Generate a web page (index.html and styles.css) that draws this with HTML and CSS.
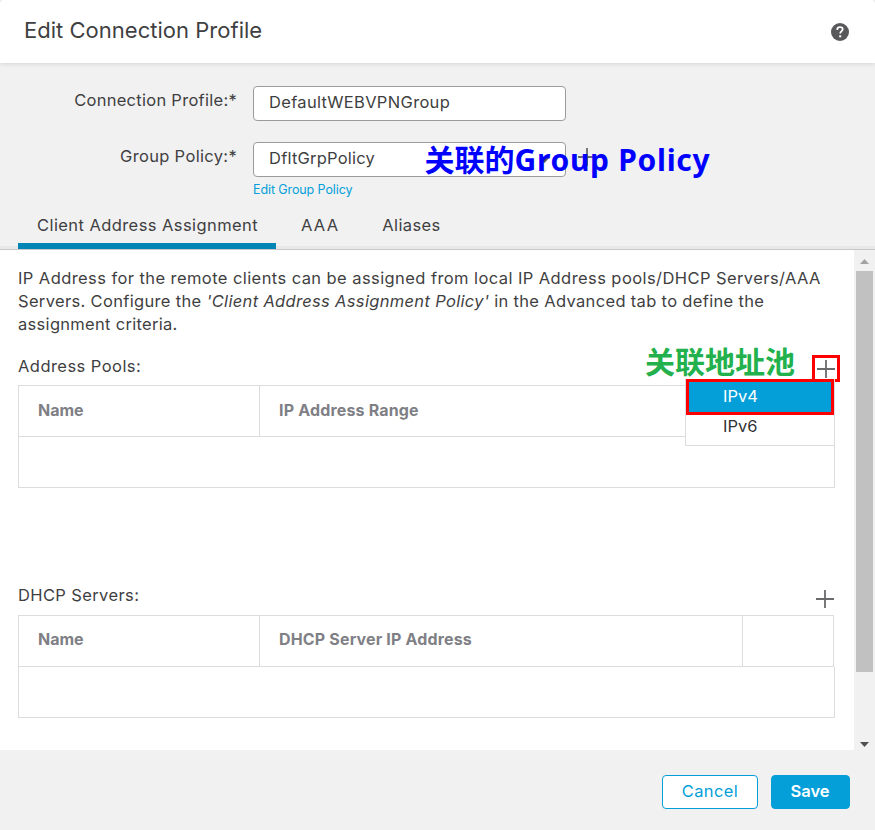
FILE: index.html
```html
<!DOCTYPE html>
<html lang="en">
<head>
<meta charset="utf-8">
<title>Edit Connection Profile</title>
<link rel="stylesheet" href="styles.css">
</head>
<body>
<div class="dialog">
  <header class="head">
    <h1><span class="t-title">Edit Connection Profile</span></h1>
    <svg class="help" width="18" height="18" viewBox="0 0 18 18"><circle cx="9" cy="9" r="9" fill="#58585b"/><path d="M6.3 7V6.3C6.3 4.9 7.4 4.2 9 4.2s2.700.8 2.700 2.100C11.700 8.200 9.200 8.100 9.200 10.600" fill="none" stroke="#fff" stroke-width="1.800"/><rect x="8.200" y="12.300" width="2" height="2" fill="#fff"/></svg>
  </header>
  <section class="form">
    <div class="row">
      <label><span class="t-conn">Connection Profile:*</span></label>
      <div class="input"><span class="t-def">DefaultWEBVPNGroup</span></div>
    </div>
    <div class="row second">
      <label><span class="t-gp">Group Policy:*</span></label>
      <div class="input select"><span class="t-dflt">DfltGrpPolicy</span>
        <svg class="caret" width="9" height="5" viewBox="0 0 9 5"><path d="M0 0h9L4.500 5z" fill="#58585b"/></svg>
      </div>
      <svg class="plus side" width="18" height="18" viewBox="0 0 18 18"><path d="M9 0v18M0 9h18" stroke="#6b6b6e" stroke-width="1.800"/></svg>
      <div class="note blue">关联的<span class="t-note">Group Policy</span></div>
    </div>
    <a class="edit"><span class="t-edit">Edit Group Policy</span></a>
    <nav class="tabs">
      <div class="tab active"><span class="t-tab">Client Address Assignment</span></div>
      <div class="tab"><span class="t-aaa">AAA</span></div>
      <div class="tab"><span class="t-ali">Aliases</span></div>
    </nav>
  </section>
  <main class="panel">
    <div class="content">
      <p><span class="t-p1">IP Address for the remote clients can be assigned from local IP Address pools/DHCP Servers/AAA</span><br><span class="t-p2">Servers. Configure the <i>'Client Address Assignment Policy'</i> in the Advanced tab to define the</span><br><span class="t-p3">assignment criteria.</span></p>
      <div class="bar">
        <span class="t-pool">Address Pools:</span>
        <div class="note green">关联地址池</div>
        <div class="mark"><svg class="plus" width="18" height="18" viewBox="0 0 18 18"><path d="M9 0v18M0 9h18" stroke="#6b6b6e" stroke-width="1.800"/></svg></div>
        <div class="menu"><div class="item on"><span class="t-ip">IPv4</span></div><div class="item"><span class="t-ip">IPv6</span></div></div>
      </div>
      <div class="table">
        <div class="thead"><div class="c1"><span class="t-name">Name</span></div><div class="c2"><span class="t-range">IP Address Range</span></div></div>
        <div class="tbody"></div>
      </div>
      <div class="bar dhcp">
        <span class="t-dhcp">DHCP Servers:</span>
        <svg class="plus" width="18" height="18" viewBox="0 0 18 18"><path d="M9 0v18M0 9h18" stroke="#6b6b6e" stroke-width="1.800"/></svg>
      </div>
      <div class="table">
        <div class="thead narrow"><div class="c1"><span class="t-name">Name</span></div><div class="c2"><span class="t-srv">DHCP Server IP Address</span></div><div class="c3"></div></div>
        <div class="tbody"></div>
      </div>
    </div>
    <div class="scroll">
      <svg width="9" height="5" viewBox="0 0 9 5"><path d="M0 5h9L4.500 0z" fill="#a3a3a3"/></svg>
      <div class="thumb"></div>
      <svg class="down" width="9" height="5" viewBox="0 0 9 5"><path d="M0 0h9L4.500 5z" fill="#505050"/></svg>
    </div>
  </main>
  <footer class="foot">
    <button class="btn cancel"><span class="t-can">Cancel</span></button>
    <button class="btn save"><span class="t-save">Save</span></button>
  </footer>
</div>
</body>
</html>
```
FILE: styles.css
```css
* { box-sizing: border-box; }
body { margin: 0; background: #f1f1f1; color: #3f3f42; font: 400 16.5px/23px Inter, "Noto Sans CJK SC", sans-serif; }
span { white-space: nowrap; }
svg { display: block; }
.dialog { width: 875px; height: 830px; display: flex; flex-direction: column; overflow: hidden; }

.head { height: 63px; flex: none; background: #fff; box-shadow: 0 1px 4px rgba(0,0,0,.12); display: flex; justify-content: space-between; padding: 15px 26px 0 24px; border-radius: 4px 4px 0 0; z-index: 1; }
h1 { margin: 0; font-size: 22px; line-height: 31px; font-weight: 400; }
.help { margin-top: 8px; }

.form { height: 187px; flex: none; display: flex; flex-direction: column; padding-top: 23px; background: #f1f1f1; border-bottom: 1px solid #c8c8c8; }
.row { display: flex; height: 35px; position: relative; }
.second { margin-top: 21px; }
.row label { width: 253px; padding-right: 16px; text-align: right; line-height: 29px; }
.input { width: 313px; border: 1px solid #9b9b9e; border-radius: 4px; background: #fff; padding-left: 15px; line-height: 31px; display: flex; }
.caret { margin: 15px 16px 0 auto; }
.side { margin: 6px 0 0 12px; }
.note { position: absolute; font: 700 30px/36px "Noto Sans", "Noto Sans CJK SC", sans-serif; white-space: nowrap; }
.blue { left: 424.5px; top: 0; color: #00f; }
.green { left: 627px; top: 8px; color: #22b14c; }
.edit { margin-left: 253px; font-size: 12.500px; color: #049fd9; line-height: 26px; }
.tabs { margin-top: auto; display: flex; padding-left: 18px; height: 42px; line-height: 37px; background: linear-gradient(#f1f1f1 39px, #e8e8e8 39px); }
.tab { margin-left: 43px; }
.tab.active { width: 258px; margin-left: 0; margin-right: -18px; padding-left: 19px; border-bottom: 6px solid #0085b4; }

.panel { height: 500px; flex: none; display: flex; background: #fff; }
.content { width: 854px; padding: 17px 19px 0 18px; }
p { margin: 0; }
.bar { position: relative; height: 49px; display: flex; justify-content: space-between; padding-top: 19px; }
.mark { position: absolute; left: 794px; top: 19px; width: 28px; height: 27px; border: 3px solid #f00; padding: 2px; }
.menu { position: absolute; left: 667px; top: 43px; width: 150px; height: 67px; background: #fff; border: 1px solid #dcdcde; border-top: 0; z-index: 2; }
.item { height: 30px; line-height: 22px; padding-left: 37px; color: #333; }
.item.on { height: 36px; width: 148px; line-height: 29px; border: 3px solid #f00; background: #049fd9; color: #fff; padding-left: 34px; }
.table { height: 103px; }
.thead { height: 52px; border: 1px solid #dcdcde; display: flex; font-size: 16px; font-weight: 700; color: #7f7f86; line-height: 49px; }
.narrow { width: 816px; line-height: 47px; }
.c1 { width: 241px; padding-left: 19px; border-right: 1px solid #dcdcde; }
.c2 { flex: 1; padding-left: 19px; }
.c3 { width: 91px; border-left: 1px solid #dcdcde; }
.tbody { height: 51px; border: 1px solid #dcdcde; border-top: 0; }
.dhcp { margin-top: 96px; height: 31px; padding-top: 0; }
.dhcp .plus { margin-top: 6px; margin-right: 1px; }
.scroll { width: 21px; background: #f1f1f1; display: flex; flex-direction: column; align-items: center; padding-top: 9px; }
.thumb { width: 17px; height: 401px; margin-top: 7px; background: #c1c1c1; }
.down { margin-top: 70px; }

.foot { height: 80px; background: #f1f1f1; display: flex; justify-content: flex-end; padding: 25px 25px 0 0; gap: 13px; }
.btn { height: 34px; border-radius: 4px; font: 400 16.5px/30px Inter, sans-serif; padding: 0 0 2px; }
.cancel { width: 96px; border: 1px solid #049fd9; color: #049fd9; background: #fff; }
.save { width: 79px; border: 1px solid #049fd9; color: #fff; background: #049fd9; font-weight: 600; padding-right: 1px; }

/* Tracking per label */
.t-title { letter-spacing: .02px; }
.t-conn { letter-spacing: .28px; }
.t-gp { letter-spacing: .33px; }
.t-def { letter-spacing: .33px; }
.t-dflt { letter-spacing: .22px; }
.t-edit { letter-spacing: -.1px; }
.t-tab { letter-spacing: .42px; }
.t-aaa { letter-spacing: 1.2px; }
.t-ali { letter-spacing: .4px; }
.t-p1 { letter-spacing: .42px; }
.t-p2 { letter-spacing: .33px; }
.t-p3 { letter-spacing: .3px; }
.t-pool { letter-spacing: .45px; }
.t-dhcp { letter-spacing: .38px; }
.t-range { letter-spacing: .17px; }
.t-srv { letter-spacing: .16px; }
.t-can { letter-spacing: .4px; }
.t-note { letter-spacing: .7px; }
```
